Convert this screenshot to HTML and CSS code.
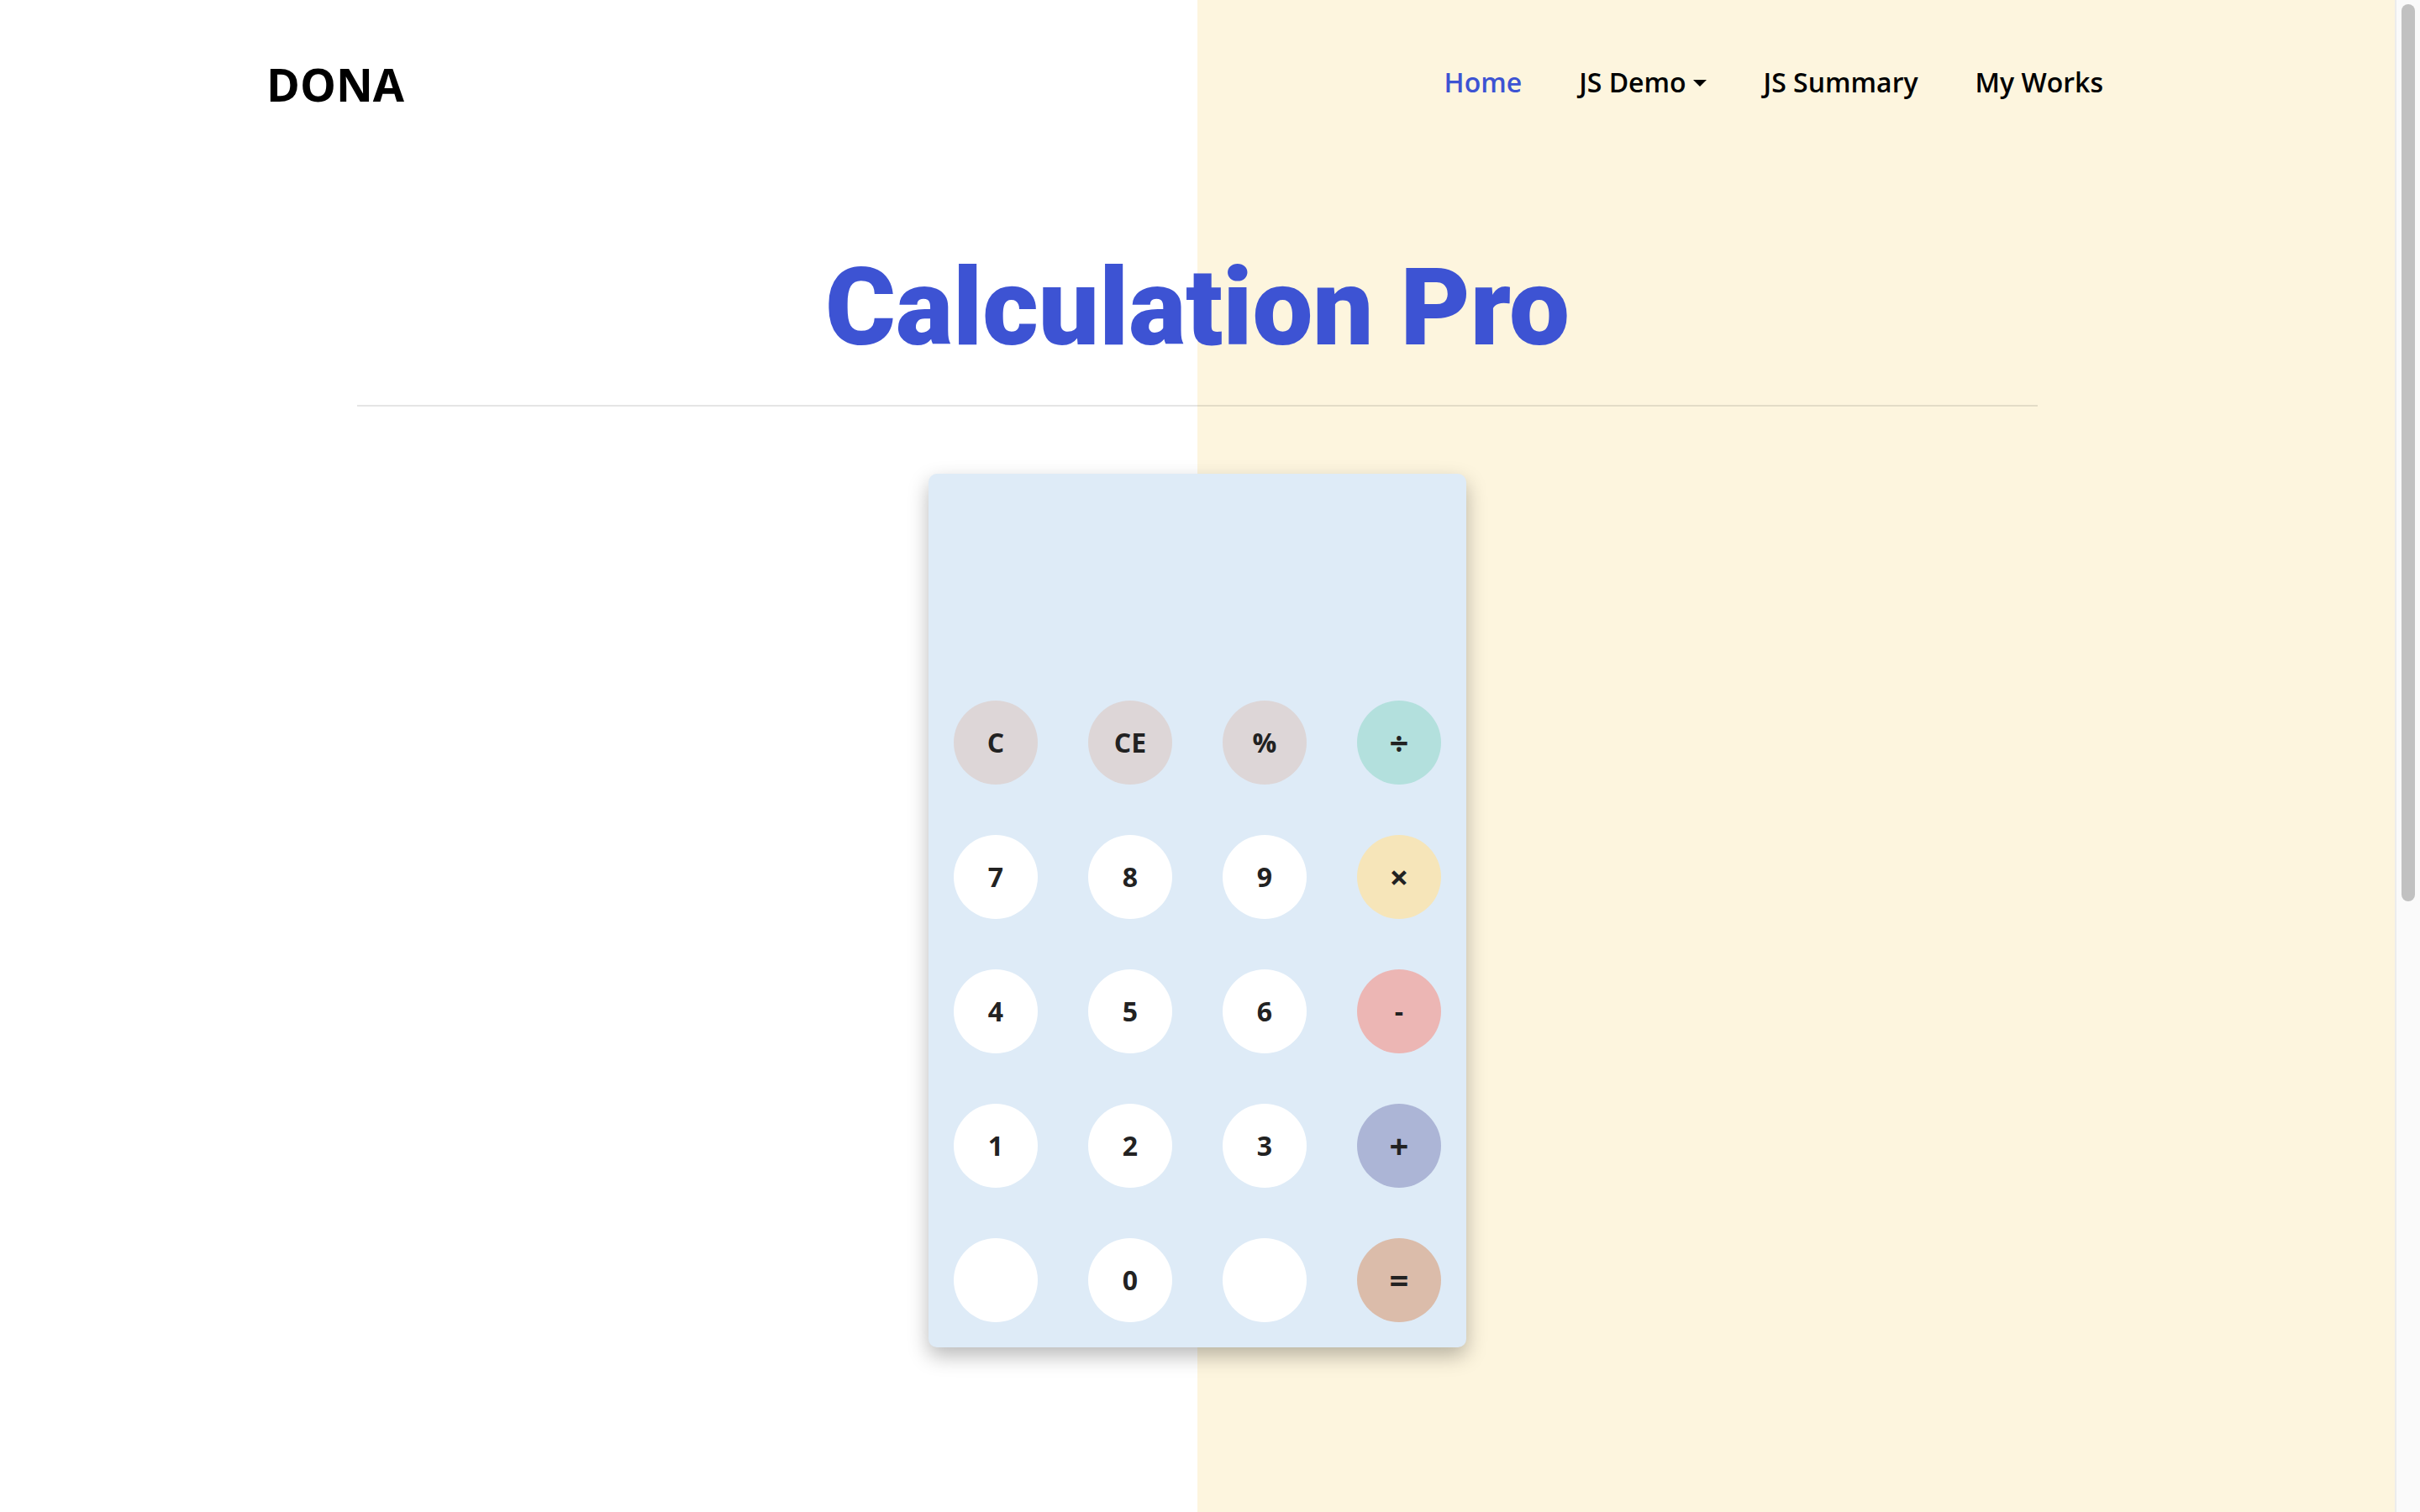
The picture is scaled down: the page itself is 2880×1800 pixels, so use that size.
FILE: index.html
```html
<!DOCTYPE html>
<html lang="en">
<head>
<meta charset="utf-8">
<title>Calculation Pro</title>
<link rel="stylesheet" href="styles.css">
</head>
<body>
<div class="page">
  <header class="navbar">
    <a class="brand" href="#">DONA</a>
    <nav class="nav">
      <a class="nav-link active" href="#">Home</a>
      <a class="nav-link dropdown" href="#">JS Demo<span class="caret"></span></a>
      <a class="nav-link" href="#">JS Summary</a>
      <a class="nav-link" href="#">My Works</a>
    </nav>
  </header>

  <main class="main">
    <h1 class="title">Calculation Pro</h1>
    <hr class="divider">

    <div class="calculator">
      <div class="display"></div>
      <div class="keys">
        <button class="key key-fn">C</button>
        <button class="key key-fn">CE</button>
        <button class="key key-fn">%</button>
        <button class="key key-div key-sym">÷</button>

        <button class="key">7</button>
        <button class="key">8</button>
        <button class="key">9</button>
        <button class="key key-mul key-sym">×</button>

        <button class="key">4</button>
        <button class="key">5</button>
        <button class="key">6</button>
        <button class="key key-sub">-</button>

        <button class="key">1</button>
        <button class="key">2</button>
        <button class="key">3</button>
        <button class="key key-add key-sym">+</button>

        <button class="key"></button>
        <button class="key">0</button>
        <button class="key"></button>
        <button class="key key-eq key-sym">=</button>
      </div>
    </div>
  </main>
</div>
<div class="scrollbar"><div class="scrollbar-thumb"></div></div>
</body>
</html>
```
FILE: styles.css
```css
html {
  background: #fafafa;
}

body {
  margin: 0;
  height: 100vh;
  overflow: hidden;
  display: flex;
  font-family: "Open Sans", "Liberation Sans", sans-serif;
  color: #000;
}

.page {
  flex: 1;
  min-width: 0;
  overflow: hidden;
  background: linear-gradient(to right, #ffffff 50%, #fdf5de 50%);
}

.scrollbar {
  width: 30px;
  flex: none;
  box-sizing: border-box;
  background: #fafafa;
  border-left: 2px solid #ececec;
  padding: 5px 6px 0 6px;
}

.scrollbar-thumb {
  height: 1068px;
  border-radius: 8px;
  background: #c1c1c1;
}

.navbar {
  max-width: 2220px;
  margin: 0 auto;
  padding: 0 30px;
  height: 200px;
  display: flex;
  align-items: center;
  justify-content: space-between;
}

.brand {
  font-size: 54px;
  font-weight: 700;
  color: #000;
  text-decoration: none;
  margin-left: 2px;
}

.nav {
  display: flex;
  align-items: center;
  padding-bottom: 6px;
}

.nav-link {
  font-size: 32px;
  font-weight: 600;
  color: #000;
  text-decoration: none;
  padding: 0 34px;
}

.nav-link:last-child {
  padding-right: 32px;
}

.nav-link.active {
  color: #3d53d3;
}

.caret {
  display: inline-block;
  width: 0;
  height: 0;
  margin-left: 8px;
  vertical-align: 7px;
  border-top: 8px solid #000;
  border-left: 8px solid transparent;
  border-right: 8px solid transparent;
}

.main {
  display: flex;
  flex-direction: column;
  align-items: center;
}

.title {
  margin: 90px 0 0;
  font-family: Roboto, "Liberation Sans", sans-serif;
  font-size: 128px;
  font-weight: 900;
  line-height: 1.2;
  color: #3d53d3;
  text-align: center;
}

.divider {
  width: 2000px;
  margin: 38px 0 0;
  border: 0;
  border-top: 2px solid rgba(0, 0, 0, 0.1);
}

.calculator {
  margin-top: 80px;
  width: 640px;
  background: #deebf7;
  border-radius: 10px;
  box-shadow: 0 10px 24px rgba(0, 0, 0, 0.28);
}

.display {
  height: 240px;
}

.keys {
  display: grid;
  grid-template-columns: repeat(4, 160px);
  grid-auto-rows: 160px;
}

.key {
  width: 100px;
  height: 100px;
  margin: 30px;
  padding: 0;
  border: 0;
  border-radius: 50%;
  background: #ffffff;
  font-family: "Open Sans", "Liberation Sans", sans-serif;
  font-size: 32px;
  font-weight: 700;
  color: #222;
  display: flex;
  align-items: center;
  justify-content: center;
}

.key-sym {
  font-size: 40px;
}

.key-fn { background: #ddd6d7; }
.key-div { background: #b3e0dd; }
.key-mul { background: #f6e5b9; }
.key-sub { background: #ecb6b4; }
.key-add { background: #acb5d6; }
.key-eq { background: #dbbcaa; }
```
